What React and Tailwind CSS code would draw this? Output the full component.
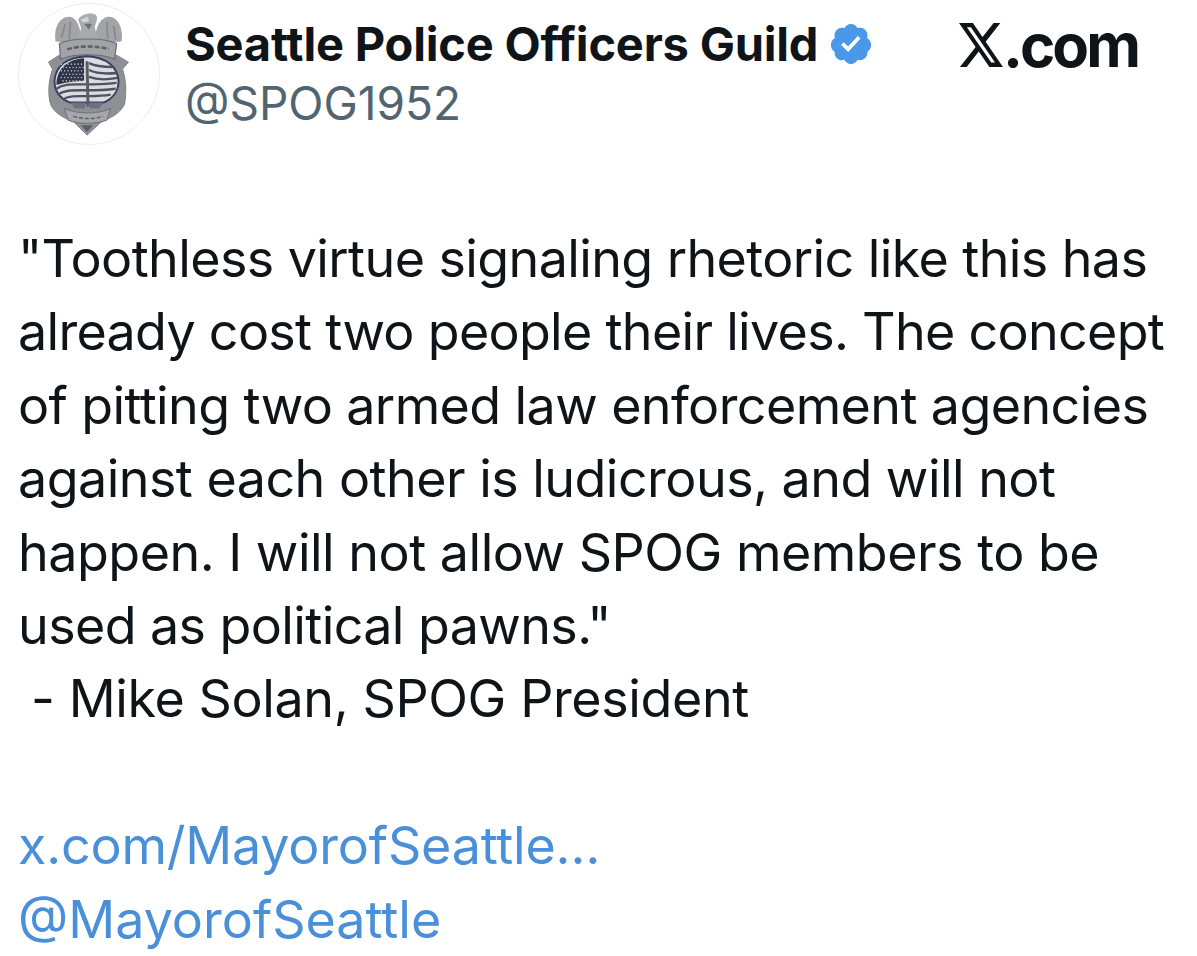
import React from 'react';

const stars = [];
for (let r = 0; r < 6; r++) {
  for (let c = 0; c < 7; c++) {
    stars.push([62 + c * 3.4 + (r % 2) * 1.7, 65 + r * 3.4]);
  }
}

// coordinates below are page pixels, the group is shifted back to the avatar box
const Badge = () => (
  <svg viewBox="0 0 142 142" className="w-full h-full">
    <defs>
      <filter id="soft"><feGaussianBlur stdDeviation="0.6" /></filter>
    </defs>
    <g filter="url(#soft)" transform="translate(-19 -4)">
      <path d="M56 42 C54 28 60 17 70 17 C79 18 82 30 82 44 Z" fill="#a3a4a7" />
      <path d="M96 44 C96 30 100 18 110 17 C120 17 125 30 123 42 Z" fill="#a3a4a7" />
      <path d="M62 38 L66 24 M70 40 L71 22 M108 22 L109 40 M115 26 L117 40" stroke="#8b8c90" strokeWidth="2" />
      <path d="M79 20 C82 14 92 12 97 15 C100 19 96 24 96 28 L100 44 L78 44 L82 28 Z" fill="#a9aaad" />
      <path d="M81 20 L89 17 L90 21 L85 23 Z" fill="#d2d3d5" />
      <path d="M85 24 L93 24 L90 30 Z" fill="#6f7076" />
      <path d="M49 63 L58 57 C72 50 106 50 120 57 L130 63 L124 70 C128 82 128 94 126 106 C120 117 110 120 102 124 L88 137 L75 124 C66 120 56 116 51 106 C48 94 49 82 53 70 Z" fill="#8f9095" stroke="#7f8187" strokeWidth="1" />
      <path d="M60 44 C74 38 104 38 118 44 L116 60 C102 54 76 54 61 60 Z" fill="#a2a3a7" stroke="#666a78" strokeWidth="1.2" />
      <path d="M68 50 C80 46 98 46 110 50" stroke="#5c5e68" strokeWidth="2.5" strokeDasharray="5 2" fill="none" />
      <path d="M55 82 C56 68 66 58 88 57 C108 58 119 68 120 82 C120 92 114 100 105 104 L71 104 C61 100 55 92 55 82 Z" fill="#dcdcdf" stroke="#364060" strokeWidth="2" />
      <path d="M57 86 C57 70 68 60 85 59 L85 82 C74 82 64 84 57 86 Z" fill="#2f3447" />
      {stars.map(([x, y], i) => (
        <circle key={i} cx={x} cy={y} r="0.8" fill="#b9bac2" />
      ))}
      <path d="M57 90 C68 82 80 88 118 84 M58 96 C70 88 84 94 117 90 M63 101 C74 94 88 100 112 96 M90 64 C98 68 106 68 114 68 M90 71 C98 75 108 75 118 74 M90 78 C98 81 108 81 119 79" stroke="#4e5262" strokeWidth="2.4" fill="none" />
      <path d="M88 62 L89 108" stroke="#5a5c64" strokeWidth="3" />
      <path d="M72 104 L86 104 L86 110 L75 110 Z M91 104 L104 104 L101 110 L91 110 Z" fill="#6d7282" />
      <path d="M65 110 C78 116 100 116 112 110 L108 122 C96 126 80 126 69 122 Z" fill="#a6a7ab" stroke="#6e7078" strokeWidth="1" />
      <path d="M74 118 C84 121 94 121 104 118" stroke="#5c5e68" strokeWidth="1.5" strokeDasharray="4 2" fill="none" />
      <path d="M82 127 L94 127 L88 134 Z" fill="#5d5f68" />
    </g>
  </svg>
);

const App = () => (
  <div className="w-[1197px] h-[956px] bg-white overflow-hidden font-['Inter',sans-serif] text-[#0f1419] pl-[18px]">
    <div className="flex items-start pt-[3px] h-[222px]">
      <div className="w-[142px] h-[142px] rounded-full border border-[#eeeeee] shrink-0 overflow-hidden">
        <Badge />
      </div>
      <div className="ml-[25px] pt-[15px] w-[775px]">
        <div className="flex items-center h-[52px]">
          <span className="text-[47px] leading-[52px] font-bold tracking-[-0.2px] whitespace-nowrap">Seattle Police Officers Guild</span>
          <svg viewBox="0 0 24 24" className="w-[46px] h-[46px] ml-[10px] shrink-0">
            <path
              fill="#4a99e9"
              d="M22.5 12.5c0-1.58-.875-2.95-2.148-3.6.154-.435.238-.905.238-1.4 0-2.21-1.71-3.998-3.818-3.998-.47 0-.92.084-1.336.25C14.818 2.415 13.51 1.5 12 1.5s-2.816.917-3.437 2.25c-.415-.165-.866-.25-1.336-.25-2.11 0-3.818 1.79-3.818 4 0 .494.083.964.237 1.4-1.272.65-2.147 2.018-2.147 3.6 0 1.495.782 2.798 1.942 3.486-.02.17-.032.34-.032.514 0 2.21 1.708 4 3.818 4 .47 0 .92-.086 1.335-.25.62 1.334 1.926 2.25 3.437 2.25 1.512 0 2.818-.916 3.437-2.25.415.163.865.248 1.336.248 2.11 0 3.818-1.79 3.818-4 0-.174-.012-.344-.033-.513 1.158-.687 1.943-1.99 1.943-3.484z"
            />
            <path fill="#ffffff" d="M10.54 16.2l-3.74-3.74 1.41-1.41 2.26 2.26 5.05-5.5 1.47 1.35z" />
          </svg>
        </div>
        <div className="text-[46px] leading-[56px] mt-[5px] text-[#536471]">@SPOG1952</div>
      </div>
      <div className="flex items-center ml-[-1px] pt-[13px] h-[70px]">
        <svg viewBox="1.25 2.25 21.6 19.5" preserveAspectRatio="none" className="w-[44px] h-[44px] shrink-0" fill="#0f1419">
          <path d="M18.244 2.25h3.308l-7.227 8.26 8.502 11.24H16.17l-5.214-6.817L4.99 21.75H1.68l7.73-8.835L1.254 2.25H8.08l4.713 6.231zm-1.161 17.52h1.833L7.084 4.126H5.117z" />
        </svg>
        <span className="text-[60px] leading-[56px] font-bold tracking-[-3px] text-[#0f1419] whitespace-nowrap">.com</span>
      </div>
    </div>
    <div className="text-[52px] leading-[73.4px] tracking-[-0.6px] whitespace-nowrap">
      <p>"Toothless virtue signaling rhetoric like this has</p>
      <p className="tracking-[-0.7px]">already cost two people their lives. The concept</p>
      <p>of pitting two armed law enforcement agencies</p>
      <p className="tracking-[-0.53px]">against each other is ludicrous, and will not</p>
      <p className="tracking-[-0.5px]">happen. I will not allow SPOG members to be</p>
      <p>used as political pawns."</p>
      <p className="pl-[13px] tracking-[-0.4px]">- Mike Solan, SPOG President</p>
      <p className="h-[73.4px]"></p>
      <p className="text-[#4a90d9] tracking-[-0.2px]">x.com/MayorofSeattle…</p>
      <p className="text-[#4a90d9] tracking-normal">@MayorofSeattle</p>
    </div>
  </div>
);

export default App;
